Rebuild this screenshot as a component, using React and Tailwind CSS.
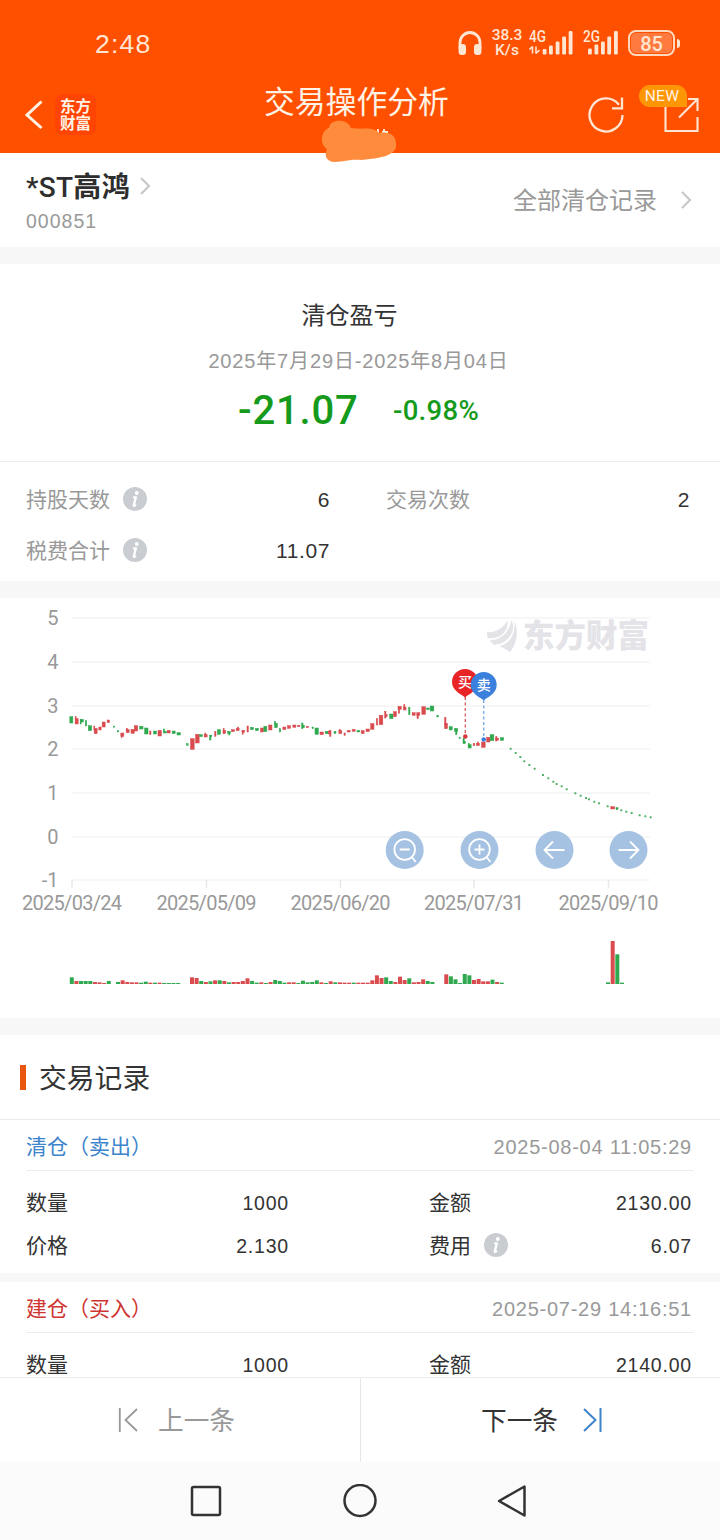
// candle layout: [x, top, bottom, width, color], drawn on a grid three times finer than the page
const CANDLES = [
  [214, 350, 369, 9, "g"], [230, 356, 372, 9, "r"], [227, 350, 360, 3, "r"], [246, 358, 366, 8, "g"], [242, 358, 372, 3, "g"],
  [258, 362, 378, 4, "g"], [270, 377, 392, 10, "g"], [287, 385, 401, 9, "r"], [283, 378, 390, 3, "r"], [300, 381, 390, 7, "r"],
  [311, 366, 381, 9, "r"], [325, 360, 368, 7, "r"], [342, 378, 382, 4, "g"], [354, 392, 396, 4, "g"], [367, 399, 409, 9, "r"],
  [365, 403, 413, 3, "r"], [383, 389, 398, 9, "r"], [381, 385, 390, 3, "r"], [398, 388, 400, 10, "r"], [408, 377, 393, 10, "r"],
  [424, 379, 387, 10, "g"], [439, 384, 402, 10, "g"], [451, 393, 404, 4, "r"], [465, 393, 402, 9, "g"], [479, 391, 408, 10, "r"],
  [492, 387, 399, 4, "g"], [497, 394, 399, 6, "g"], [506, 391, 399, 9, "r"], [521, 393, 401, 9, "g"], [536, 398, 405, 10, "g"],
  [562, 431, 436, 5, "g"], [577, 416, 448, 11, "r"], [592, 403, 429, 11, "r"], [603, 404, 410, 8, "g"], [617, 404, 411, 9, "r"],
  [616, 399, 405, 3, "r"], [631, 406, 420, 4, "g"], [633, 406, 410, 5, "g"], [646, 395, 409, 4, "r"], [657, 389, 403, 9, "g"],
  [673, 391, 400, 8, "r"], [671, 385, 400, 3, "r"], [687, 394, 401, 8, "g"], [688, 398, 405, 3, "g"], [699, 389, 395, 9, "r"],
  [713, 385, 392, 9, "r"], [714, 381, 388, 3, "r"], [730, 391, 397, 8, "r"], [728, 392, 403, 3, "r"], [743, 378, 396, 4, "r"],
  [756, 382, 389, 9, "g"], [771, 385, 392, 9, "g"], [786, 384, 396, 9, "r"], [796, 379, 395, 9, "g"], [811, 375, 390, 10, "r"],
  [828, 370, 383, 8, "g"], [825, 364, 374, 3, "g"], [840, 386, 396, 4, "g"], [853, 381, 389, 9, "r"], [867, 377, 385, 9, "r"],
  [883, 375, 382, 9, "r"], [896, 376, 380, 8, "r"], [907, 369, 386, 4, "g"], [911, 377, 383, 5, "g"], [922, 379, 383, 7, "r"],
  [938, 381, 386, 4, "g"], [950, 384, 403, 10, "g"], [965, 396, 404, 10, "r"], [980, 394, 401, 9, "g"], [991, 391, 409, 4, "r"],
  [988, 393, 402, 6, "r"], [1005, 394, 400, 6, "g"], [1021, 392, 401, 9, "r"], [1019, 388, 394, 3, "r"], [1034, 399, 406, 4, "r"],
  [1046, 391, 396, 9, "r"], [1061, 388, 394, 9, "r"], [1075, 391, 396, 8, "g"], [1088, 392, 401, 9, "r"], [1103, 387, 395, 10, "r"],
  [1117, 371, 388, 10, "r"], [1131, 356, 375, 4, "r"], [1143, 346, 374, 11, "r"], [1156, 334, 354, 4, "r"], [1159, 344, 350, 5, "r"],
  [1174, 342, 356, 10, "g"], [1185, 335, 350, 9, "r"], [1199, 319, 328, 10, "r"], [1197, 322, 340, 4, "r"], [1214, 321, 330, 8, "r"],
  [1213, 314, 324, 3, "r"], [1228, 323, 344, 4, "g"], [1241, 338, 346, 9, "r"], [1255, 338, 346, 9, "r"], [1253, 340, 356, 4, "r"],
  [1271, 320, 343, 11, "r"], [1284, 324, 329, 8, "g"], [1296, 318, 333, 11, "g"], [1313, 347, 351, 5, "g"], [1338, 370, 386, 9, "r"],
  [1336, 353, 374, 4, "r"], [1352, 380, 390, 9, "g"], [1368, 385, 395, 9, "g"], [1369, 388, 404, 4, "g"], [1379, 412, 416, 4, "g"],
  [1391, 416, 430, 4, "g"], [1394, 424, 430, 6, "g"], [1409, 434, 444, 9, "g"], [1407, 430, 440, 3, "g"], [1422, 431, 437, 5, "r"],
  [1434, 430, 437, 9, "r"], [1434, 426, 432, 3, "r"], [1450, 426, 442, 11, "r"], [1465, 412, 426, 10, "r"], [1476, 404, 422, 11, "g"],
  [1491, 414, 421, 9, "r"], [1489, 409, 423, 3, "r"], [1506, 413, 421, 10, "g"], [1838, 620, 627, 11, "r"], [1851, 623, 629, 6, "g"],
];

// limit-down days, one dot each
const DOTS = [
  [1532, 446], [1547, 459], [1561, 471], [1573, 484], [1588, 495], [1604, 506], [1629, 525], [1645, 535], [1660, 545],
  [1670, 552], [1685, 559], [1700, 568], [1726, 580], [1742, 587], [1758, 594], [1767, 598], [1783, 605], [1797, 610],
  [1823, 619], [1864, 631], [1879, 635], [1895, 639], [1919, 646], [1936, 649], [1952, 652],
];

// volume bars grouped by run of trading days
const VOLUME = [
  { slot: 0, bars: "g20 r9 g9 g9 g9 r6 r5 r3 g9" },
  { slot: 10, bars: "g6 r11 r6 r5 r5 g4 g7 r4 g4 r4 g3 g3 g3 g3" },
  {
    slot: 26,
    bars: "r20 r18 g9 r6 g8 r11 g11 r9 g5 r6 r6 r9 r17 g9 g4 r5 g3 r6 g12 g9 g4 r5 r5 g3 g10 g5 g6 g11 r5 g3 r8 g5 r5 r4 r4 g4 r4 r4 r4 r11 r26 r18 g20 g9 r6 r22 r12 g17 r5 r6 r14 g9 g6",
  },
  { slot: 81, bars: "r29 g23 g14 g3 g30 g26 r12 r15 r8 r8 g13 r6 g4" },
  { slot: 116, bars: "g5 r129 g89 g4" },
];

const AXIS_Y = [
  ["5", 20], ["4", 64], ["3", 108], ["2", 151], ["1", 195], ["0", 239], ["-1", 282],
];
const AXIS_X = [
  ["2025/03/24", 72], ["2025/05/09", 206.5], ["2025/06/20", 340.5], ["2025/07/31", 474], ["2025/09/10", 608.5],
];

const COLORS = { r: "#d94b4f", g: "#2fa84f" };

const RECORDS = [
  {
    title: "清仓（卖出）",
    color: "text-[#3d84cc]",
    time: "2025-08-04 11:05:29",
    qty: "1000",
    amount: "2130.00",
    price: "2.130",
    fee: "6.07",
  },
  {
    title: "建仓（买入）",
    color: "text-[#cf3431]",
    time: "2025-07-29 14:16:51",
    qty: "1000",
    amount: "2140.00",
  },
];

function InfoDot() {
  return (
    <svg width="24" height="24" viewBox="0 0 24 24" className="relative -top-px shrink-0">
      <circle cx="12" cy="12" r="12" fill="#c9cdd2" />
      <circle cx="13.8" cy="6" r="1.9" fill="#fff" />
      <path d="M11 10.3h1.9l-2.2 8.200c0 .6.700.400 1.500-.2" fill="none" stroke="#fff" strokeWidth="2.300" strokeLinecap="round" strokeLinejoin="round" />
    </svg>
  );
}

function Chevron({ className }) {
  return (
    <svg width="12" height="20" viewBox="0 0 12 20" className={className}>
      <path d="M2 2l8 8-8 8" fill="none" stroke="#c8c8c8" strokeWidth="2.2" />
    </svg>
  );
}

function Signal({ label, bars, arrows }) {
  return (
    <svg width="46" height="30" viewBox="0 0 46 30" fill="#ffe6d3">
      <text x="0" y="14" fontSize="16" fontWeight="500" textLength="17" lengthAdjust="spacingAndGlyphs" className="font-['Roboto',sans-serif]">
        {label}
      </text>
      {arrows && <path d="M3.500 18.500v7M3.500 18.500l-3 3M7 25.500v-7M7 25.500l3.500-3.500" fill="none" stroke="#ffe6d3" strokeWidth="1.6" />}
      {bars.map(([x, h]) => (
        <rect key={x} x={x} y={26.5 - h} width="3.8" height={h} rx="1.2" />
      ))}
    </svg>
  );
}

function StatusBar() {
  return (
    <div className="flex h-[86px] items-center pl-[95px] text-[#ffe6d3]">
      <span className="w-[363px] pt-[2px] font-['Liberation_Sans'] text-[26.5px] leading-none tracking-[1.2px]">2:48</span>
      <svg width="24" height="26" viewBox="0 0 24 26" className="shrink-0">
        <path d="M2 19v-6.5a10 10 0 0 1 20 0V19" fill="none" stroke="#ffe6d3" strokeWidth="2.8" />
        <rect x="0.6" y="14" width="7.4" height="11" rx="3.2" fill="#ffe6d3" />
        <rect x="16" y="14" width="7.4" height="11" rx="3.2" fill="#ffe6d3" />
      </svg>
      <div className="ml-[9px] w-[32px] text-center font-['Roboto'] text-[15.5px] leading-[15.5px] font-medium">
        <div>38.3</div>
        <div>K/s</div>
      </div>
      <div className="ml-[6px] flex">
        <Signal label="4G" arrows bars={[[13.7, 5.5], [20, 9], [26.700, 13], [33.200, 18], [39.700, 23.500]]} />
        <div className="ml-[8px]">
          <Signal label="2G" bars={[[5, 6], [11.500, 10], [18, 13], [24.300, 18], [31, 23.500]]} />
        </div>
      </div>
      <div className="-ml-px flex items-center">
        <div className="flex h-[26px] w-[47px] rounded-[8px] border-2 border-[#ffd9bd] p-[1px]">
          <div className="flex w-full items-center justify-center rounded-[5px] bg-[#ff7a3f] pt-px font-['Roboto'] text-[20px] leading-none font-medium">
            85
          </div>
        </div>
        <div className="ml-[2px] h-[9px] w-[3px] rounded-r bg-[#ffe6d3]" />
      </div>
    </div>
  );
}

function Header() {
  return (
    <header className="relative h-[153px] shrink-0 bg-[#ff5000]">
      <StatusBar />
      <div className="flex pl-[24px]">
        <svg width="20" height="32" viewBox="0 0 20 32" className="mt-[13px]">
          <path d="M17.5 2.5L3 16l14.5 13" fill="none" stroke="#fff3e6" strokeWidth="3" />
        </svg>
        <div className="mt-[8px] ml-[11px] flex h-[41px] w-[41px] flex-col items-center justify-center rounded-[8px] bg-[#ff4404] text-[15.5px] leading-[17px] font-bold text-[#fff3e6]">
          <span>东方</span>
          <span>财富</span>
        </div>
        <h1 className="mt-[1px] ml-[168px] w-[186px] text-[30.8px] leading-[32px] whitespace-nowrap text-[#fff3e6]">
          交易操作分析
        </h1>
        <svg width="38" height="38" viewBox="0 0 38 38" className="mt-[9px] ml-[137px]" fill="none" stroke="#ffe6d3" strokeWidth="2.3">
          <path d="M35.5 20A16.5 16.5 0 1 1 32 9.8" />
          <path d="M35 2.500v10.800H25" />
        </svg>
        <div className="relative ml-[38px] h-[40px] w-[36px]">
          <svg width="36" height="36" viewBox="0 0 36 36" className="mt-[10px]" fill="none" stroke="#ffe6d3" strokeWidth="2.1">
            <path d="M2.500 11v24h32V21M25 3h9.500v12M34.500 3L16 21.500" />
          </svg>
          <span className="absolute -top-px -left-[24px] flex h-[22px] w-[48px] items-center justify-center rounded-full rounded-br-[4px] bg-[#ff9605] pt-[2px] pr-[2px] font-['Roboto'] text-[15.5px] tracking-[0.3px] text-[#fff3e6]">
            NEW
          </span>
        </div>
      </div>
      <svg width="80" height="46" viewBox="0 0 80 46" className="absolute top-[118px] left-[320px] z-10">
        <path d="M8 11h9M46 14h5M52 12v6M58 11v6M62 14h6M64 11v5" stroke="#fff3e6" strokeWidth="1.8" />
        <path
          d="M9 10C10 1 27 0 31 10C44 12 52 8 59 15C72 13 77 19 76 29C74 38 60 40 42 42C30 41 24 44 15 44C6 44 4 37 7 31C0 27 0 13 9 10Z"
          fill="#ff8c3c"
        />
      </svg>
    </header>
  );
}

function StockRow() {
  return (
    <section className="flex h-[94px] shrink-0 items-start justify-between bg-white pr-[28px] pl-[26px]">
      <div>
        <div className="mt-[18px] flex h-[32px] items-center">
          <span className="pt-[2px] font-['Roboto','Noto_Sans_CJK_SC',sans-serif] text-[28px] leading-[32px] font-medium tracking-[0.3px] text-[#2e2e2e]">
            *ST<span className="font-bold">高鸿</span>
          </span>
          <Chevron className="-mt-[2px] ml-[9px]" />
        </div>
        <div className="mt-[6px] font-['Liberation_Sans'] text-[19.5px] leading-[24px] tracking-[1px] text-[#999]">000851</div>
      </div>
      <div className="mt-[32px] flex h-[32px] items-center text-[24px] text-[#999]">
        全部清仓记录
        <Chevron className="-mt-[2px] ml-[23px]" />
      </div>
    </section>
  );
}

function Summary() {
  return (
    <section className="shrink-0 bg-white text-[#333]">
      <div className="flex h-[198px] flex-col items-center border-b border-[#ebebeb] pt-[36px]">
        <div className="mr-[21px] text-[24px] leading-[32px]">清仓盈亏</div>
        <div className="mt-[16px] mr-[3px] text-[20px] leading-[26px] tracking-[0.85px] text-[#999]">
          2025年7月29日-2025年8月04日
        </div>
        <div className="mt-[14px] mr-[3px] flex items-center font-['Roboto'] font-medium text-[#169a1c]">
          <span className="w-[121px] text-[40px] leading-[46px] tracking-[0.8px]">-21.07</span>
          <span className="ml-[34px] text-[27.5px] leading-[46px] tracking-[0.3px]">-0.98%</span>
        </div>
      </div>
      <div className="grid h-[119px] grid-cols-[304px_304px] content-start gap-x-[56px] pt-[12px] pl-[26px] text-[21px]">
        <Stat label="持股天数" value="6" info />
        <Stat label="交易次数" value="2" />
        <Stat label="税费合计" value="11.07" info />
      </div>
    </section>
  );
}

function Stat({ label, value, info }) {
  return (
    <div className="flex h-[51px] items-center">
      <span className="mr-[13px] text-[#999]">{label}</span>
      {info && <InfoDot />}
      <span className="ml-auto tracking-[0.6px]">{value}</span>
    </div>
  );
}

function Pin({ x, y, color, text }) {
  return (
    <g transform={`translate(${x} ${y})`}>
      <path d="M0 15.500C-3 12.500-13 9-13 0A13 13 0 0 1 13 0C13 9 3 12.500 0 15.500Z" fill={color} />
      <text x="0" y="5" fontSize="14" fontWeight="500" textAnchor="middle" fill="#fff">
        {text}
      </text>
    </g>
  );
}

function RoundButton({ x, children }) {
  return (
    <g transform={`translate(${x} 252)`} fill="none" stroke="#fff" strokeWidth="1.8">
      <circle r="19" fill="#a5c2e3" stroke="none" />
      {children}
    </g>
  );
}

function KLineChart() {
  return (
    <section className="h-[420px] shrink-0 bg-white">
      <svg width="720" height="420" viewBox="0 0 720 420">
        {AXIS_Y.map(([label, y]) => (
          <g key={label}>
            <path d={`M72 ${y}H650`} stroke="#f4f4f4" strokeWidth="1.5" />
            <text x="58.5" y={y + 6.5} fontSize="20" textAnchor="end" fill="#999" className="font-['Roboto',sans-serif]">
              {label}
            </text>
          </g>
        ))}
        {AXIS_X.map(([label, x]) => (
          <g key={label}>
            <path d={`M${x} 282v8`} stroke="#e8e8e8" strokeWidth="1.5" />
            <text x={x} y="312" fontSize="20" textLength="100" textAnchor="middle" fill="#999" className="font-['Roboto',sans-serif]">
              {label}
            </text>
          </g>
        ))}

        {/* watermark */}
        <g fill="#e3e3e8">
          <path d="M487 34C496 35 503 30 507.500 22.500C509 33 500 42 487.500 40Z" />
          <path d="M489.500 42.500C502 42 509 34 511.500 22C517 33 508 46 494 47Z" />
          <path d="M499 48C510 46 515.500 36 514.500 23C519 33 517 45 510 54C507 52 504 50 499 48Z" />
          <text x="523" y="48.5" fontSize="31.5" fontWeight="900" textLength="126">
            东方财富
          </text>
        </g>

        <g transform="translate(0 2) scale(0.33333)">
          {CANDLES.map(([x, top, bottom, w, c], i) => (
            <rect
              key={i}
              x={x - w / 2}
              y={top}
              width={w}
              height={bottom - top}
              fill={COLORS[c]}
              stroke={COLORS[c]}
              strokeWidth="1.5"
            />
          ))}
          {DOTS.map(([x, y]) => (
            <rect key={x} x={x - 3} y={y - 3} width="6" height="6" rx="1" fill="#4fb066" />
          ))}
        </g>

        <path d="M465.300 99v38" stroke="#d9575a" strokeWidth="1.3" strokeDasharray="3 2.500" />
        <path d="M483.700 102v38" stroke="#7fb0e6" strokeWidth="1.5" strokeDasharray="3 2.500" />
        <circle cx="465.300" cy="138.500" r="2.300" fill="#d6383c" />
        <circle cx="483.700" cy="141.500" r="2.300" fill="#3a80dc" />
        <Pin x={465} y={84} color="#e92427" text="买" />
        <Pin x={483.7} y={87} color="#3a80dc" text="卖" />

        <RoundButton x={404.7}>
          <circle cx="0" cy="-0.500" r="10.300" />
          <path d="M7.300 7.300L11 12M-5-0.500H5" />
        </RoundButton>
        <RoundButton x={479.5}>
          <circle cx="0" cy="-0.500" r="10.300" />
          <path d="M7.300 7.300L11 12M-5-0.500H5M0-5.500v10" />
        </RoundButton>
        <RoundButton x={554.5}>
          <path d="M10 0H-10M-1.500-8.500L-10 0l8.500 8.500" />
        </RoundButton>
        <RoundButton x={628.5}>
          <path d="M-10 0H10M1.500-8.500L10 0l-8.500 8.500" />
        </RoundButton>

        {VOLUME.map((run) =>
          run.bars.split(" ").map((bar, i) => {
            const h = Number(bar.slice(1)) / 3;
            return (
              <rect
                key={`${run.slot}-${i}`}
                x={69.8 + (run.slot + i) * 4.623}
                y={386 - h}
                width="4"
                height={h}
                fill={COLORS[bar[0]]}
              />
            );
          })
        )}
      </svg>
    </section>
  );
}

function Cell({ label, value, info }) {
  return (
    <div className="flex h-[43px] items-center">
      <span className="mr-[13px]">{label}</span>
      {info && <InfoDot />}
      <span className="ml-auto pt-[2px] text-[19.5px] tracking-[0.8px]">{value}</span>
    </div>
  );
}

function TradeRecord({ record }) {
  return (
    <div className="shrink-0 bg-white text-[21px] text-[#333]">
      <div className="mr-[26px] ml-[26px] flex h-[51px] items-center justify-between border-b border-[#ececec] pt-[3px]">
        <span className={record.color}>{record.title}</span>
        <span className="mr-[2px] text-[20px] tracking-[0.75px] text-[#999]">{record.time}</span>
      </div>
      <div className="grid h-[102px] grid-cols-[263px_263px] content-start gap-x-[140px] pt-[10px] pl-[26px]">
        <Cell label="数量" value={record.qty} />
        <Cell label="金额" value={record.amount} />
        {record.price && <Cell label="价格" value={record.price} />}
        {record.fee && <Cell label="费用" value={record.fee} info />}
      </div>
    </div>
  );
}

function Pager() {
  return (
    <div className="flex h-[85px] shrink-0 border-t border-[#ececec] bg-white text-[25.7px]">
      <button className="flex w-[361px] items-center border-r border-[#e6e6e6] pl-[118px] text-[#999]">
        <svg width="22" height="26" viewBox="0 0 22 26" fill="none" stroke="#999" strokeWidth="1.8">
          <path d="M1.800 1v24M19 2L7.500 13L19 24" />
        </svg>
        <span className="ml-[18px] pt-[2px]">上一条</span>
      </button>
      <button className="flex flex-1 items-center pl-[120px] text-[#333]">
        <span className="pt-[2px]">下一条</span>
        <svg width="22" height="26" viewBox="0 0 22 26" className="ml-[24px]" fill="none" stroke="#3d84cc" strokeWidth="2">
          <path d="M18.500 1v24M2 2l11.500 11L2 24" />
        </svg>
      </button>
    </div>
  );
}

function SystemNav() {
  return (
    <div className="flex h-[78px] shrink-0 items-center bg-[#fbfbfb] pl-[190px]">
      <svg width="338" height="34" viewBox="0 0 338 34" fill="none" stroke="#333" strokeWidth="2.500" strokeLinejoin="round">
        <rect x="2" y="3" width="28" height="28" rx="1.500" />
        <circle cx="170" cy="16.500" r="15.500" />
        <path d="M334.500 2.500v29L309 17Z" />
      </svg>
    </div>
  );
}

export default function App() {
  return (
    <div className="flex h-[1540px] w-[720px] flex-col overflow-hidden bg-[#f7f7f7] font-['Liberation_Sans','Noto_Sans_CJK_SC',sans-serif]">
      <Header />
      <main className="flex min-h-0 flex-1 flex-col overflow-hidden">
        <StockRow />
        <div className="h-[17px] shrink-0" />
        <Summary />
        <div className="h-[17px] shrink-0" />
        <KLineChart />
        <div className="h-[17px] shrink-0" />
        <div className="flex h-[85px] shrink-0 items-center border-b border-[#ebebeb] bg-white pl-[20px]">
          <div className="h-[25px] w-[6px] bg-[#e8560f]" />
          <h2 className="ml-[13px] pt-[4px] text-[27.8px] text-[#333]">交易记录</h2>
        </div>
        {RECORDS.map((record, i) => (
          <div key={record.time} className="flex shrink-0 flex-col">
            {i > 0 && <div className="h-[9px]" />}
            <TradeRecord record={record} />
          </div>
        ))}
      </main>
      <Pager />
      <SystemNav />
    </div>
  );
}
